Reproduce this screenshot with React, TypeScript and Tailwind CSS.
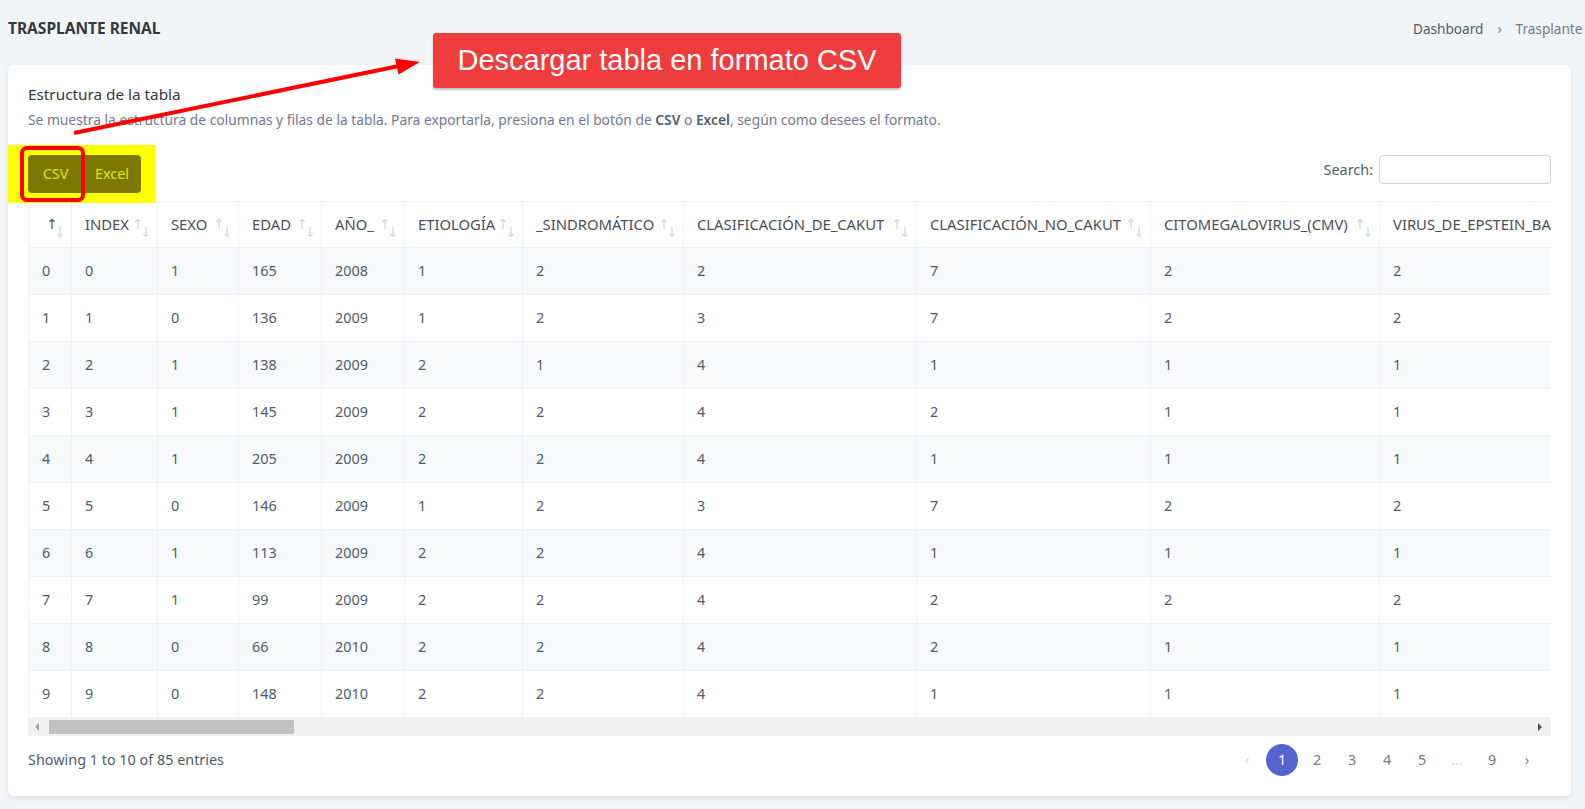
import React from "react";

const columns = [
  { label: "", width: 43 },
  { label: "INDEX", width: 86 },
  { label: "SEXO", width: 81 },
  { label: "EDAD", width: 83 },
  { label: "AÑO_", width: 83 },
  { label: "ETIOLOGÍA", width: 118 },
  { label: "_SINDROMÁTICO", width: 161 },
  { label: "CLASIFICACIÓN_DE_CAKUT", width: 233 },
  { label: "CLASIFICACIÓN_NO_CAKUT", width: 234 },
  { label: "CITOMEGALOVIRUS_(CMV)", width: 229 },
  { label: "VIRUS_DE_EPSTEIN_BARR_(VEB)", width: 300 },
];

const rows = [
  [0, 0, 1, 165, 2008, 1, 2, 2, 7, 2, 2],
  [1, 1, 0, 136, 2009, 1, 2, 3, 7, 2, 2],
  [2, 2, 1, 138, 2009, 2, 1, 4, 1, 1, 1],
  [3, 3, 1, 145, 2009, 2, 2, 4, 2, 1, 1],
  [4, 4, 1, 205, 2009, 2, 2, 4, 1, 1, 1],
  [5, 5, 0, 146, 2009, 1, 2, 3, 7, 2, 2],
  [6, 6, 1, 113, 2009, 2, 2, 4, 1, 1, 1],
  [7, 7, 1, 99, 2009, 2, 2, 4, 2, 2, 2],
  [8, 8, 0, 66, 2010, 2, 2, 4, 2, 1, 1],
  [9, 9, 0, 148, 2010, 2, 2, 4, 1, 1, 1],
];

const pages = ["‹", "1", "2", "3", "4", "5", "…", "9", "›"];

function SortArrows({ active }: { active?: boolean }) {
  return (
    <>
      <span
        className={`absolute right-[13px] top-[12px] text-[14px] font-['DejaVu_Sans'] ${
          active ? "text-[#505d69]" : "text-[#505d69] opacity-25"
        }`}
      >
        ↑
      </span>
      <span className="absolute right-[5px] top-[20px] text-[14px] font-['DejaVu_Sans'] text-[#505d69] opacity-25">
        ↓
      </span>
    </>
  );
}

export default function App() {
  return (
    <div className="relative w-[1585px] h-[809px] overflow-hidden bg-[#f1f5f7] font-['Noto_Sans',sans-serif] text-[#505d69]">
      {/* Page title + breadcrumb */}
      <div className="grid grid-cols-[1405px_auto] items-center h-[58px] pl-2">
        <h4 className="text-[15.5px] font-bold text-[#343a40] uppercase">
          Trasplante Renal
        </h4>
        <div className="flex items-center whitespace-nowrap text-[13.6px]">
          <span className="text-[#505d69]">Dashboard</span>
          <span className="px-[14px] text-[#74788d]">›</span>
          <span className="text-[#74788d]">Trasplante Renal</span>
        </div>
      </div>

      {/* Card */}
      <div className="ml-2 mt-[7px] w-[1563px] bg-white rounded-[5px] shadow-[0_2px_4px_rgba(0,0,0,0.08)] p-5">
        <h4 className="text-[15.3px] leading-[18px] text-[#343a40]">
          Estructura de la tabla
        </h4>
        <p className="mt-[7px] mb-[25px] text-[13.8px] leading-[20px] text-[#74788d]">
          Se muestra la estructura de columnas y filas de la tabla. Para
          exportarla, presiona en el botón de{" "}
          <span className="font-semibold text-[#505d69]">CSV</span> o{" "}
          <span className="font-semibold text-[#505d69]">Excel</span>, según
          como desees el formato.
        </p>

        {/* Export buttons + search */}
        <div className="relative flex justify-between items-start h-[38px]">
          <div className="absolute -left-5 -top-[10px] w-[147px] h-[58px] bg-[#ffff00]" />
          <div className="relative z-10 flex">
            <button className="w-[55px] h-[38px] bg-[#7a7800] text-[#e6e600] text-[14.4px] rounded-l-[4px]">
              CSV
            </button>
            <button className="w-[58px] h-[38px] bg-[#7a7800] text-[#e6e600] text-[14.4px] rounded-r-[4px]">
              Excel
            </button>
          </div>
          <div className="absolute z-20 -left-2 -top-[9px] w-[65px] h-[56px] border-4 border-[#ff0000] rounded-[7px]" />
          <label className="flex items-center text-[14.4px] text-[#505d69]">
            Search:
            <input className="ml-[6px] w-[172px] h-[29px] border border-[#ced4da] rounded-[4px] outline-none" />
          </label>
        </div>

        {/* Table */}
        <div className="mt-2 w-full overflow-hidden">
          <table className="table-fixed border-collapse w-[1651px] text-[14.4px]">
            <colgroup>
              {columns.map((c, i) => (
                <col key={i} style={{ width: c.width }} />
              ))}
            </colgroup>
            <thead>
              <tr>
                {columns.map((c, i) => (
                  <th
                    key={i}
                    className="relative h-[46px] pl-[13px] pr-[30px] text-left font-normal text-[14.8px] text-[#495057] whitespace-nowrap overflow-hidden border border-[#eff2f7]"
                  >
                    {c.label}
                    {i < 10 && <SortArrows active={i === 0} />}
                  </th>
                ))}
              </tr>
            </thead>
            <tbody>
              {rows.map((r, ri) => (
                <tr key={ri} className={ri % 2 === 0 ? "bg-[#f8f9fa]" : "bg-white"}>
                  {r.map((v, ci) => (
                    <td
                      key={ci}
                      className="h-[47px] pl-[13px] whitespace-nowrap border border-[#eff2f7]"
                    >
                      {v}
                    </td>
                  ))}
                </tr>
              ))}
            </tbody>
          </table>
        </div>

        {/* Horizontal scrollbar */}
        <div className="flex items-center h-[18px] bg-[#f1f1f1]">
          <svg width="21" height="18" viewBox="0 0 21 18">
            <polygon points="7,9 11,5 11,13" fill="#a3a3a3" />
          </svg>
          <div className="w-[245px] h-[14px] bg-[#c1c1c1]" />
          <div className="flex-1" />
          <svg width="24" height="18" viewBox="0 0 24 18">
            <polygon points="15,9 11,5 11,13" fill="#505050" />
          </svg>
        </div>

        {/* Footer */}
        <div className="flex justify-between items-center mt-2 h-[32px]">
          <div className="text-[14.4px] text-[#505d69]">
            Showing 1 to 10 of 85 entries
          </div>
          <ul className="flex gap-[3px] mr-2">
            {pages.map((p, i) => (
              <li
                key={i}
                className={`w-[32px] h-[32px] rounded-full flex items-center justify-center text-[14.4px] ${
                  p === "1"
                    ? "bg-[#5664d2] text-white"
                    : p === "‹" || p === "…"
                    ? "text-[#ced4da]"
                    : "text-[#74788d]"
                }`}
              >
                {p}
              </li>
            ))}
          </ul>
        </div>
      </div>

      {/* Annotation: callout + arrow */}
      <div className="absolute left-[433px] top-[33px] w-[468px] h-[55px] bg-[#ef3c3c] rounded-[3px] shadow-[0_2px_2px_rgba(0,0,0,0.25)] flex items-center justify-center text-white text-[29px] font-['Liberation_Sans',sans-serif]">
        Descargar tabla en formato CSV
      </div>
      <svg
        className="absolute left-0 top-0 pointer-events-none"
        width="1585"
        height="200"
        viewBox="0 0 1585 200"
      >
        <line x1="74" y1="133" x2="399" y2="66" stroke="#ff0000" strokeWidth="4" />
        <polygon points="420,62 398.5,74.5 395,58.5" fill="#ff0000" />
      </svg>
    </div>
  );
}
